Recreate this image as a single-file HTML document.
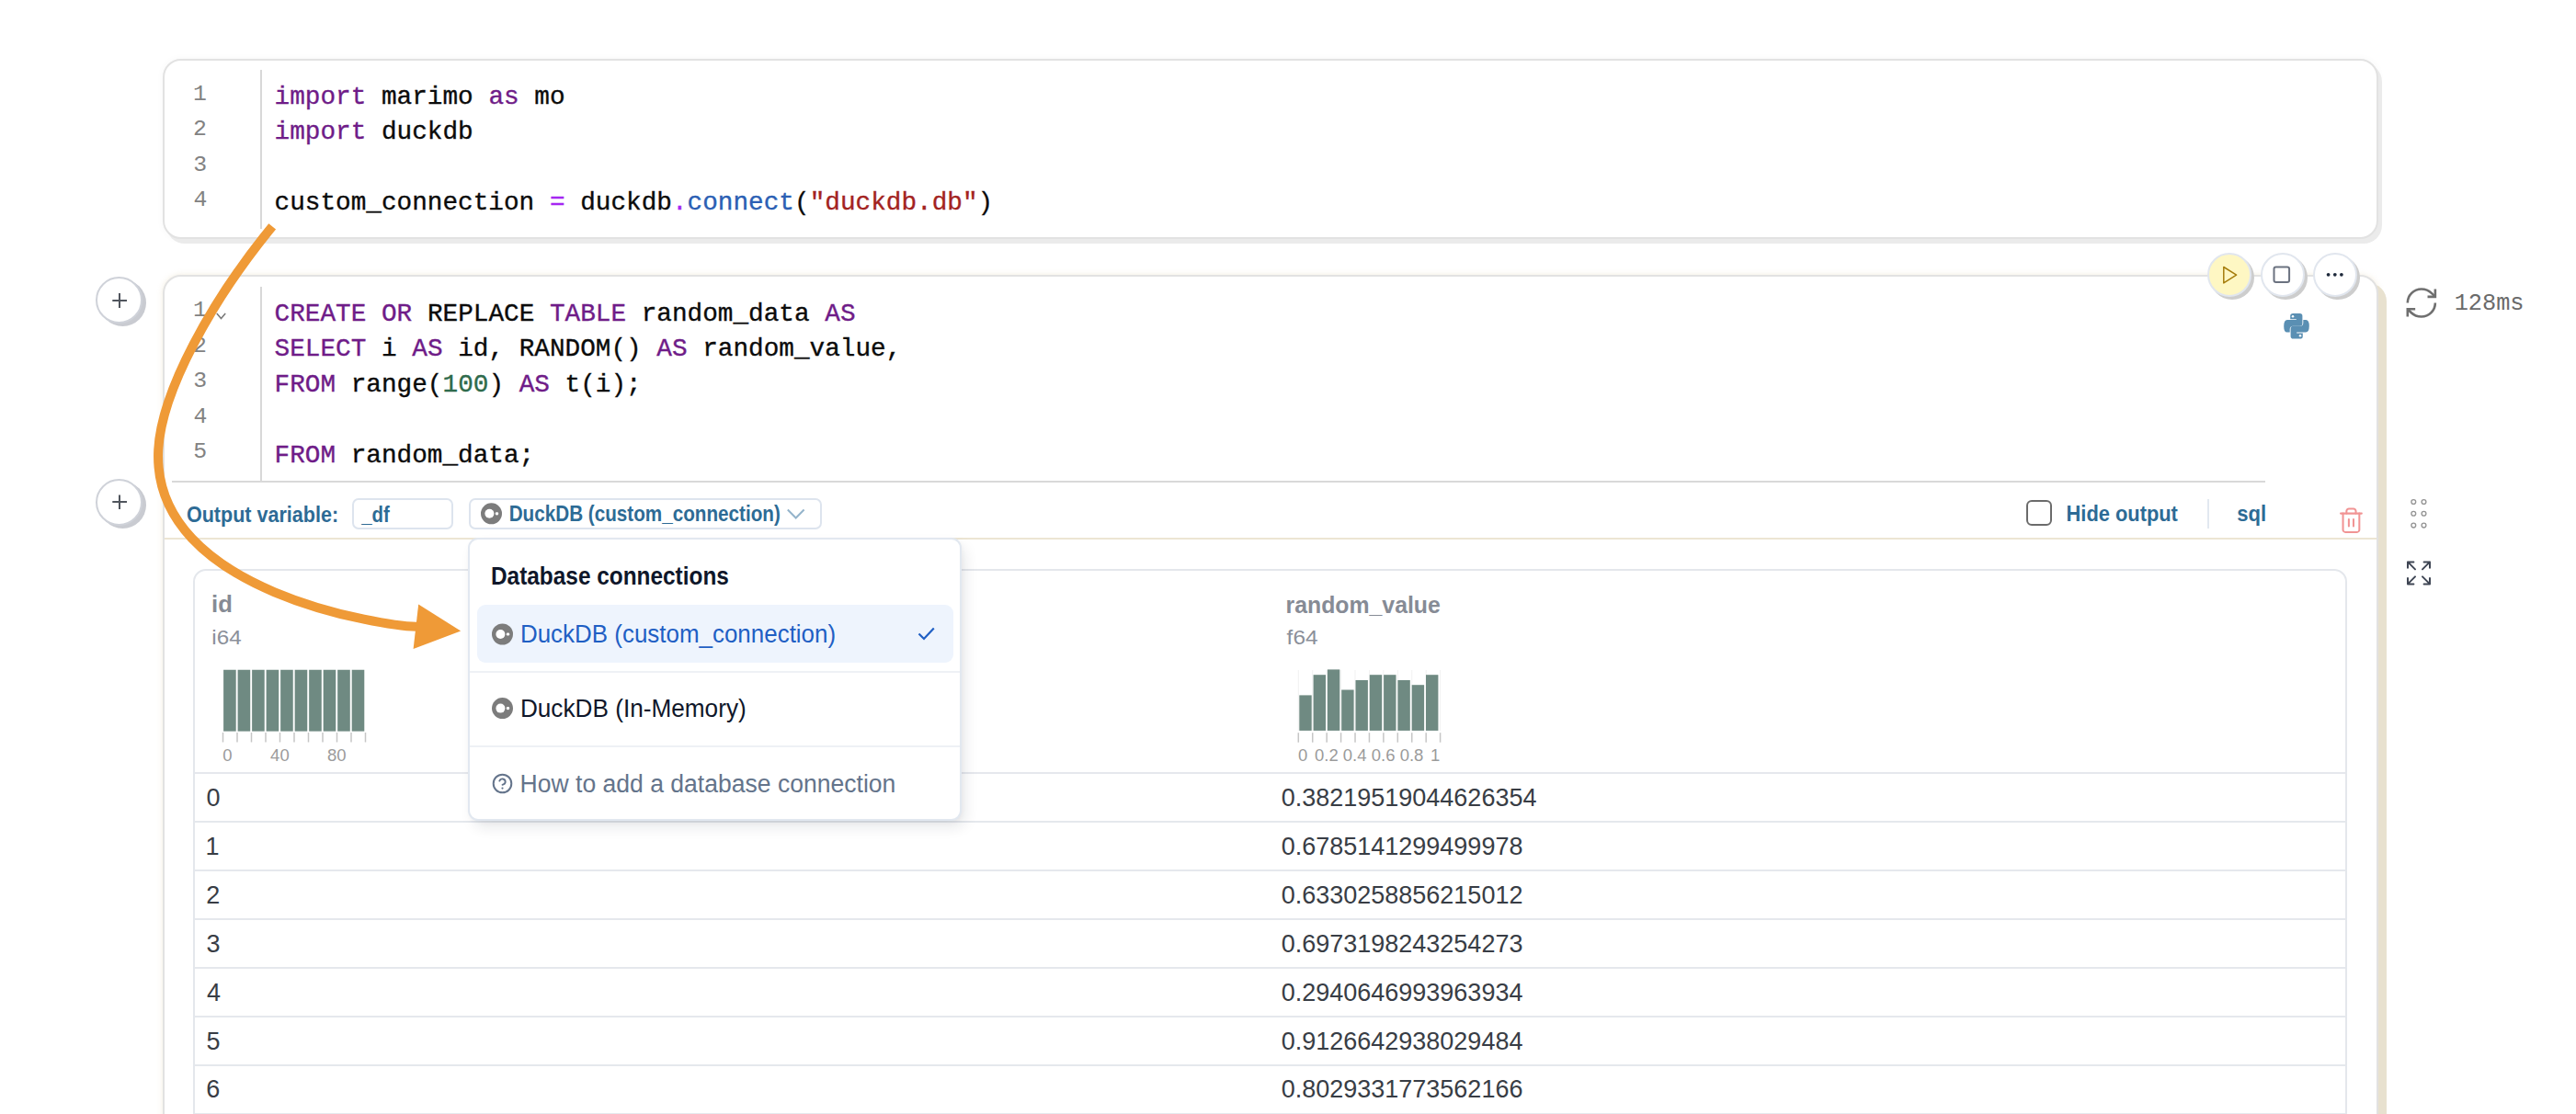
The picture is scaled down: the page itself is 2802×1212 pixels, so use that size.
<!DOCTYPE html>
<html><head><meta charset="utf-8"><title>marimo</title>
<style>
html,body{margin:0;padding:0;background:#fff;}
body{width:2802px;height:1212px;position:relative;overflow:hidden;font-family:"Liberation Sans",sans-serif;}
.abs{position:absolute;box-sizing:border-box;}
.cell1{left:177px;top:64px;width:2410px;height:196px;border:2px solid #e2e2e2;border-radius:20px;background:#fff;box-shadow:4px 5px 0 0 #ebebeb,0 0 8px rgba(0,0,0,0.035);}
.cell2{left:177px;top:299px;width:2410px;height:1000px;border:2px solid #e2e2e2;border-radius:20px;background:#fff;box-shadow:9px 9px 0 0 #e8e1cf,0 0 6px rgba(215,195,150,0.30);}
.gut{width:2px;background:#d8d8d8;}
.plus{width:51px;height:51px;border:2px solid #cfd2d9;border-radius:50%;background:#fff;box-shadow:4px 3px 0 0 #c9cbd1;}
.cbtn{width:48px;height:48px;border:2px solid #e1e6ee;border-radius:50%;background:#fff;box-shadow:3px 3px 0 0 #cdcdcd;}
.inp{border:2px solid #dde4ee;border-radius:7px;background:#fff;}
.tbl{left:210px;top:619px;width:2343px;height:700px;border:2px solid #e4e7ec;border-radius:14px;background:#fff;}
.hl{position:absolute;left:212px;width:2339px;height:2px;background:#e5e8ed;}
.pop{left:509px;top:585px;width:537px;height:308px;border:2px solid #e2e8f0;border-radius:11px;background:#fff;box-shadow:5px 8px 16px -2px rgba(15,23,42,0.11),1px 2px 4px rgba(15,23,42,0.03);}
svg.ov{position:absolute;left:0;top:0;}
</style></head>
<body>
<div class="abs cell1"></div>
<div class="abs gut" style="left:283px;top:76px;height:173px;"></div>
<div class="abs cell2"></div>
<div class="abs gut" style="left:283px;top:312px;height:211px;"></div>
<div class="abs" style="left:187px;top:523px;width:2277px;height:2px;background:#d9d9d9;"></div>
<div class="abs" style="left:179px;top:585px;width:2406px;height:2px;background:#ece5d3;"></div>
<div class="abs plus" style="left:104px;top:301px;"></div>
<div class="abs plus" style="left:104px;top:520.5px;"></div>
<div class="abs cbtn" style="left:2401px;top:275px;background:#fef7c3;"></div>
<div class="abs cbtn" style="left:2459px;top:275px;"></div>
<div class="abs cbtn" style="left:2516px;top:275px;"></div>
<div class="abs inp" style="left:383px;top:542px;width:110px;height:34px;"></div>
<div class="abs inp" style="left:510px;top:542px;width:384px;height:34px;"></div>
<div class="abs" style="left:2204px;top:544px;width:28px;height:28px;border:2.5px solid #6b6b6b;border-radius:6px;box-sizing:border-box;"></div>
<div class="abs" style="left:2401px;top:543px;width:2px;height:32px;background:#e2e8f0;"></div>
<div class="abs tbl"></div>
<div class="hl" style="top:840.2px"></div><div class="hl" style="top:893.1px"></div><div class="hl" style="top:946.1px"></div><div class="hl" style="top:999.0px"></div><div class="hl" style="top:1051.9px"></div><div class="hl" style="top:1104.8px"></div><div class="hl" style="top:1157.8px"></div><div class="hl" style="top:1210.7px"></div>
<div class="abs pop"></div>
<div class="abs" style="left:519px;top:658px;width:518px;height:63px;border-radius:9px;background:#eef4fd;"></div>
<div class="abs" style="left:511px;top:730px;width:533px;height:2px;background:#eef1f5;"></div>
<div class="abs" style="left:511px;top:811px;width:533px;height:2px;background:#eef1f5;"></div>
<svg class="ov" width="2802" height="1212" viewBox="0 0 2802 1212">
<!-- plus icons -->
<g stroke="#50555d" stroke-width="2" stroke-linecap="butt" fill="none">
<path d="M122.3 327H138M130 319V335"/>
<path d="M122.3 546H138M130 538.6V553.9"/>
</g>
<!-- fold chevron -->
<path d="M235.8 341L240.5 346.5L245.2 341" stroke="#7a7a7a" stroke-width="1.6" fill="none"/>
<!-- run / stop / more -->
<path d="M2418.8 290.5L2432.6 299.2L2418.8 307.9Z" stroke="#a57c0b" stroke-width="1.5" fill="none" stroke-linejoin="round"/>
<rect x="2473.5" y="290.4" width="16.6" height="16.6" rx="2.2" stroke="#6b7280" stroke-width="2" fill="none"/>
<g fill="#1e293b"><circle cx="2532.6" cy="298.8" r="1.9"/><circle cx="2539.8" cy="298.8" r="1.9"/><circle cx="2546.9" cy="298.8" r="1.9"/></g>
<!-- python -->
<g transform="translate(2484.2,341)" fill="#5a8fb3">
<path d="M7 2.6 Q7 0 10.2 0 L17.4 0 Q20.2 0 20.2 2.8 L20.2 11 Q20.2 13.8 17.4 13.8 L10 13.8 Q6.5 13.8 6.5 17.3 L6.5 20.6 L3.6 20.6 Q0 20.6 0 14 Q0 7 3.8 7 L13.6 7 L13.6 6.2 L7 6.2 Z"/>
<path d="M7 2.6 Q7 0 10.2 0 L17.4 0 Q20.2 0 20.2 2.8 L20.2 11 Q20.2 13.8 17.4 13.8 L10 13.8 Q6.5 13.8 6.5 17.3 L6.5 20.6 L3.6 20.6 Q0 20.6 0 14 Q0 7 3.8 7 L13.6 7 L13.6 6.2 L7 6.2 Z" transform="rotate(180 13.8 13.8)"/>
<circle cx="9.8" cy="3.3" r="1.25" fill="#fff"/>
<circle cx="17.8" cy="24.3" r="1.25" fill="#fff"/>
</g>
<!-- refresh -->
<g transform="translate(2613.8,309.5) scale(1.67)" stroke="#6f6f6f" stroke-width="1.55" fill="none" stroke-linecap="butt">
<path d="M3 12a9 9 0 0 1 9-9 9.75 9.75 0 0 1 6.74 2.74L21 8"/><path d="M21 3v5h-5"/>
<path d="M21 12a9 9 0 0 1-9 9 9.75 9.75 0 0 1-6.74-2.74L3 16"/><path d="M8 16H3v5"/>
</g>
<!-- trash -->
<g transform="translate(2542.2,551) scale(1.27)" stroke="#f19494" stroke-width="1.6" fill="none" stroke-linecap="round" stroke-linejoin="round">
<path d="M3 6h18"/><path d="M19 6v14c0 1-1 2-2 2H7c-1 0-2-1-2-2V6"/><path d="M8 6V4c0-1 1-2 2-2h4c1 0 2 1 2 2v2"/>
<line x1="10" y1="11" x2="10" y2="17"/><line x1="14" y1="11" x2="14" y2="17"/>
</g>
<!-- drag dots -->
<g stroke="#959595" stroke-width="1.35" fill="none">
<circle cx="2625.3" cy="546" r="2.4"/><circle cx="2636.5" cy="546" r="2.4"/>
<circle cx="2625.3" cy="558.8" r="2.4"/><circle cx="2636.5" cy="558.8" r="2.4"/>
<circle cx="2625.3" cy="571.6" r="2.4"/><circle cx="2636.5" cy="571.6" r="2.4"/>
</g>
<!-- expand -->
<g transform="translate(2615,607.4) scale(1.333)" stroke="#3f4654" stroke-width="1.5" fill="none" stroke-linecap="round" stroke-linejoin="round">
<path d="m21 21-6-6m6 6v-4.8m0 4.8h-4.8"/><path d="M3 16.2V21m0 0h4.8M3 21l6-6"/><path d="M21 7.8V3m0 0h-4.8M21 3l-6 6"/><path d="M3 7.8V3m0 0h4.8M3 3l6 6"/>
</g>
<!-- dropdown chevron -->
<path d="M856.8 554.5L865.7 563.5L874.6 554.5" stroke="#94b4cb" stroke-width="2" fill="none"/>
<!-- duck icons -->
<circle cx="534.5" cy="558.8" r="11.5" fill="#7c7c7c"/><circle cx="532.4" cy="558.8" r="5.00" fill="#fff"/><rect x="538.8" y="557.1999999999999" width="3.4" height="3.2" rx="1.4" fill="#fff"/>
<circle cx="546.5" cy="690" r="11.5" fill="#7c7c7c"/><circle cx="544.4" cy="690" r="5.00" fill="#fff"/><rect x="550.8" y="688.4" width="3.4" height="3.2" rx="1.4" fill="#fff"/>
<circle cx="546.5" cy="770.6" r="11.5" fill="#7c7c7c"/><circle cx="544.4" cy="770.6" r="5.00" fill="#fff"/><rect x="550.8" y="769.0" width="3.4" height="3.2" rx="1.4" fill="#fff"/>
<!-- check -->
<path d="M999.5 689.5L1005 695L1015.8 683.5" stroke="#1f5fc4" stroke-width="2.2" fill="none"/>
<!-- help -->
<circle cx="546.5" cy="852.5" r="9.8" stroke="#64748b" stroke-width="2" fill="none"/>
<path d="M543.3 849.6a3.3 3.3 0 0 1 6.4 1.1c0 2.2-3.2 3.1-3.2 3.1" stroke="#64748b" stroke-width="1.9" fill="none" stroke-linecap="round"/>
<circle cx="546.5" cy="857.6" r="1.1" fill="#64748b"/>
<!-- histograms -->
<rect x="1411.80" y="729" width="1" height="66" fill="#f1f1f1"/><rect x="1427.23" y="729" width="1" height="66" fill="#f1f1f1"/><rect x="1442.66" y="729" width="1" height="66" fill="#f1f1f1"/><rect x="1458.09" y="729" width="1" height="66" fill="#f1f1f1"/><rect x="1473.52" y="729" width="1" height="66" fill="#f1f1f1"/><rect x="1488.95" y="729" width="1" height="66" fill="#f1f1f1"/><rect x="1504.38" y="729" width="1" height="66" fill="#f1f1f1"/><rect x="1519.81" y="729" width="1" height="66" fill="#f1f1f1"/><rect x="1535.24" y="729" width="1" height="66" fill="#f1f1f1"/><rect x="1550.67" y="729" width="1" height="66" fill="#f1f1f1"/><rect x="1566.10" y="729" width="1" height="66" fill="#f1f1f1"/>
<rect x="243.10" y="728.75" width="13.60" height="66.85" fill="#6f8a82"/><rect x="258.61" y="728.75" width="13.60" height="66.85" fill="#6f8a82"/><rect x="274.12" y="728.75" width="13.60" height="66.85" fill="#6f8a82"/><rect x="289.63" y="728.75" width="13.60" height="66.85" fill="#6f8a82"/><rect x="305.14" y="728.75" width="13.60" height="66.85" fill="#6f8a82"/><rect x="320.65" y="728.75" width="13.60" height="66.85" fill="#6f8a82"/><rect x="336.16" y="728.75" width="13.60" height="66.85" fill="#6f8a82"/><rect x="351.67" y="728.75" width="13.60" height="66.85" fill="#6f8a82"/><rect x="367.18" y="728.75" width="13.60" height="66.85" fill="#6f8a82"/><rect x="382.69" y="728.75" width="13.60" height="66.85" fill="#6f8a82"/>
<rect x="241.75" y="797" width="1.5" height="10.5" fill="#c6c6c6"/><rect x="257.25" y="797" width="1.5" height="10.5" fill="#c6c6c6"/><rect x="272.75" y="797" width="1.5" height="10.5" fill="#c6c6c6"/><rect x="288.25" y="797" width="1.5" height="10.5" fill="#c6c6c6"/><rect x="303.75" y="797" width="1.5" height="10.5" fill="#c6c6c6"/><rect x="319.25" y="797" width="1.5" height="10.5" fill="#c6c6c6"/><rect x="334.75" y="797" width="1.5" height="10.5" fill="#c6c6c6"/><rect x="350.25" y="797" width="1.5" height="10.5" fill="#c6c6c6"/><rect x="365.75" y="797" width="1.5" height="10.5" fill="#c6c6c6"/><rect x="381.25" y="797" width="1.5" height="10.5" fill="#c6c6c6"/><rect x="396.75" y="797" width="1.5" height="10.5" fill="#c6c6c6"/>
<rect x="1413.30" y="756.40" width="13.40" height="38.50" fill="#6f8a82"/><rect x="1428.60" y="734.20" width="13.40" height="60.70" fill="#6f8a82"/><rect x="1443.90" y="728.40" width="13.40" height="66.50" fill="#6f8a82"/><rect x="1459.20" y="750.50" width="13.40" height="44.40" fill="#6f8a82"/><rect x="1474.50" y="740.00" width="13.40" height="54.90" fill="#6f8a82"/><rect x="1489.80" y="734.20" width="13.40" height="60.70" fill="#6f8a82"/><rect x="1505.10" y="734.20" width="13.40" height="60.70" fill="#6f8a82"/><rect x="1520.40" y="740.00" width="13.40" height="54.90" fill="#6f8a82"/><rect x="1535.70" y="745.20" width="13.40" height="49.70" fill="#6f8a82"/><rect x="1551.00" y="734.20" width="13.40" height="60.70" fill="#6f8a82"/>
<rect x="1411.55" y="797.2" width="1.5" height="10.5" fill="#c6c6c6"/><rect x="1426.98" y="797.2" width="1.5" height="10.5" fill="#c6c6c6"/><rect x="1442.41" y="797.2" width="1.5" height="10.5" fill="#c6c6c6"/><rect x="1457.84" y="797.2" width="1.5" height="10.5" fill="#c6c6c6"/><rect x="1473.27" y="797.2" width="1.5" height="10.5" fill="#c6c6c6"/><rect x="1488.70" y="797.2" width="1.5" height="10.5" fill="#c6c6c6"/><rect x="1504.13" y="797.2" width="1.5" height="10.5" fill="#c6c6c6"/><rect x="1519.56" y="797.2" width="1.5" height="10.5" fill="#c6c6c6"/><rect x="1534.99" y="797.2" width="1.5" height="10.5" fill="#c6c6c6"/><rect x="1550.42" y="797.2" width="1.5" height="10.5" fill="#c6c6c6"/><rect x="1565.85" y="797.2" width="1.5" height="10.5" fill="#c6c6c6"/>
<!-- text -->
<text x="298.60" y="112.90" font-family="Liberation Mono" font-size="27.713" fill="#6f1c88" stroke="#6f1c88" stroke-width="0.35" xml:space="preserve">import</text>
<text x="398.38" y="112.90" font-family="Liberation Mono" font-size="27.713" fill="#0b0b0b" stroke="#0b0b0b" stroke-width="0.35" xml:space="preserve"> marimo </text>
<text x="531.42" y="112.90" font-family="Liberation Mono" font-size="27.713" fill="#6f1c88" stroke="#6f1c88" stroke-width="0.35" xml:space="preserve">as</text>
<text x="564.68" y="112.90" font-family="Liberation Mono" font-size="27.713" fill="#0b0b0b" stroke="#0b0b0b" stroke-width="0.35" xml:space="preserve"> mo</text>
<text x="210.06" y="109.00" font-family="Liberation Mono" font-weight="normal" font-size="24.80" fill="#828282">1</text>
<text x="298.60" y="151.35" font-family="Liberation Mono" font-size="27.713" fill="#6f1c88" stroke="#6f1c88" stroke-width="0.35" xml:space="preserve">import</text>
<text x="398.38" y="151.35" font-family="Liberation Mono" font-size="27.713" fill="#0b0b0b" stroke="#0b0b0b" stroke-width="0.35" xml:space="preserve"> duckdb</text>
<text x="210.06" y="147.45" font-family="Liberation Mono" font-weight="normal" font-size="24.80" fill="#828282">2</text>
<text x="210.19" y="185.90" font-family="Liberation Mono" font-weight="normal" font-size="24.80" fill="#828282">3</text>
<text x="298.60" y="228.25" font-family="Liberation Mono" font-size="27.713" fill="#0b0b0b" stroke="#0b0b0b" stroke-width="0.35" xml:space="preserve">custom_connection </text>
<text x="597.94" y="228.25" font-family="Liberation Mono" font-size="27.713" fill="#a626f2" stroke="#a626f2" stroke-width="0.35" xml:space="preserve">=</text>
<text x="614.57" y="228.25" font-family="Liberation Mono" font-size="27.713" fill="#0b0b0b" stroke="#0b0b0b" stroke-width="0.35" xml:space="preserve"> duckdb</text>
<text x="730.98" y="228.25" font-family="Liberation Mono" font-size="27.713" fill="#a626f2" stroke="#a626f2" stroke-width="0.35" xml:space="preserve">.</text>
<text x="747.61" y="228.25" font-family="Liberation Mono" font-size="27.713" fill="#2b5fb4" stroke="#2b5fb4" stroke-width="0.35" xml:space="preserve">connect</text>
<text x="864.02" y="228.25" font-family="Liberation Mono" font-size="27.713" fill="#0b0b0b" stroke="#0b0b0b" stroke-width="0.35" xml:space="preserve">(</text>
<text x="880.65" y="228.25" font-family="Liberation Mono" font-size="27.713" fill="#a3231f" stroke="#a3231f" stroke-width="0.35" xml:space="preserve">&quot;duckdb.db&quot;</text>
<text x="1063.58" y="228.25" font-family="Liberation Mono" font-size="27.713" fill="#0b0b0b" stroke="#0b0b0b" stroke-width="0.35" xml:space="preserve">)</text>
<text x="210.56" y="224.35" font-family="Liberation Mono" font-weight="normal" font-size="24.80" fill="#828282">4</text>
<text x="298.60" y="348.90" font-family="Liberation Mono" font-size="27.713" fill="#6f1c88" stroke="#6f1c88" stroke-width="0.35" xml:space="preserve">CREATE</text>
<text x="415.01" y="348.90" font-family="Liberation Mono" font-size="27.713" fill="#6f1c88" stroke="#6f1c88" stroke-width="0.35" xml:space="preserve">OR</text>
<text x="448.27" y="348.90" font-family="Liberation Mono" font-size="27.713" fill="#0b0b0b" stroke="#0b0b0b" stroke-width="0.35" xml:space="preserve"> REPLACE </text>
<text x="597.94" y="348.90" font-family="Liberation Mono" font-size="27.713" fill="#6f1c88" stroke="#6f1c88" stroke-width="0.35" xml:space="preserve">TABLE</text>
<text x="681.09" y="348.90" font-family="Liberation Mono" font-size="27.713" fill="#0b0b0b" stroke="#0b0b0b" stroke-width="0.35" xml:space="preserve"> random_data </text>
<text x="897.28" y="348.90" font-family="Liberation Mono" font-size="27.713" fill="#6f1c88" stroke="#6f1c88" stroke-width="0.35" xml:space="preserve">AS</text>
<text x="210.06" y="344.40" font-family="Liberation Mono" font-weight="normal" font-size="24.80" fill="#828282">1</text>
<text x="298.60" y="387.40" font-family="Liberation Mono" font-size="27.713" fill="#6f1c88" stroke="#6f1c88" stroke-width="0.35" xml:space="preserve">SELECT</text>
<text x="398.38" y="387.40" font-family="Liberation Mono" font-size="27.713" fill="#0b0b0b" stroke="#0b0b0b" stroke-width="0.35" xml:space="preserve"> i </text>
<text x="448.27" y="387.40" font-family="Liberation Mono" font-size="27.713" fill="#6f1c88" stroke="#6f1c88" stroke-width="0.35" xml:space="preserve">AS</text>
<text x="481.53" y="387.40" font-family="Liberation Mono" font-size="27.713" fill="#0b0b0b" stroke="#0b0b0b" stroke-width="0.35" xml:space="preserve"> id, RANDOM() </text>
<text x="714.35" y="387.40" font-family="Liberation Mono" font-size="27.713" fill="#6f1c88" stroke="#6f1c88" stroke-width="0.35" xml:space="preserve">AS</text>
<text x="747.61" y="387.40" font-family="Liberation Mono" font-size="27.713" fill="#0b0b0b" stroke="#0b0b0b" stroke-width="0.35" xml:space="preserve"> random_value,</text>
<text x="210.06" y="382.90" font-family="Liberation Mono" font-weight="normal" font-size="24.80" fill="#828282">2</text>
<text x="298.60" y="425.90" font-family="Liberation Mono" font-size="27.713" fill="#6f1c88" stroke="#6f1c88" stroke-width="0.35" xml:space="preserve">FROM</text>
<text x="365.12" y="425.90" font-family="Liberation Mono" font-size="27.713" fill="#0b0b0b" stroke="#0b0b0b" stroke-width="0.35" xml:space="preserve"> range(</text>
<text x="481.53" y="425.90" font-family="Liberation Mono" font-size="27.713" fill="#2f6b4c" stroke="#2f6b4c" stroke-width="0.35" xml:space="preserve">100</text>
<text x="531.42" y="425.90" font-family="Liberation Mono" font-size="27.713" fill="#0b0b0b" stroke="#0b0b0b" stroke-width="0.35" xml:space="preserve">) </text>
<text x="564.68" y="425.90" font-family="Liberation Mono" font-size="27.713" fill="#6f1c88" stroke="#6f1c88" stroke-width="0.35" xml:space="preserve">AS</text>
<text x="597.94" y="425.90" font-family="Liberation Mono" font-size="27.713" fill="#0b0b0b" stroke="#0b0b0b" stroke-width="0.35" xml:space="preserve"> t(i);</text>
<text x="210.19" y="421.40" font-family="Liberation Mono" font-weight="normal" font-size="24.80" fill="#828282">3</text>
<text x="210.56" y="459.90" font-family="Liberation Mono" font-weight="normal" font-size="24.80" fill="#828282">4</text>
<text x="298.60" y="502.90" font-family="Liberation Mono" font-size="27.713" fill="#6f1c88" stroke="#6f1c88" stroke-width="0.35" xml:space="preserve">FROM</text>
<text x="365.12" y="502.90" font-family="Liberation Mono" font-size="27.713" fill="#0b0b0b" stroke="#0b0b0b" stroke-width="0.35" xml:space="preserve"> random_data;</text>
<text x="210.19" y="498.40" font-family="Liberation Mono" font-weight="normal" font-size="24.80" fill="#828282">5</text>
<text x="202.89" y="567.50" font-family="Liberation Sans" font-weight="bold" font-size="24.50" fill="#2d6b95" textLength="165.22" lengthAdjust="spacingAndGlyphs">Output variable:</text>
<text x="393.20" y="567.50" font-family="Liberation Sans" font-weight="bold" font-size="24.50" fill="#2d6b95" textLength="30.55" lengthAdjust="spacingAndGlyphs">_df</text>
<text x="553.66" y="566.80" font-family="Liberation Sans" font-weight="bold" font-size="24.00" fill="#2d6b95" textLength="295.17" lengthAdjust="spacingAndGlyphs">DuckDB (custom_connection)</text>
<text x="2247.58" y="566.80" font-family="Liberation Sans" font-weight="bold" font-size="24.00" fill="#2d6b95" textLength="121.33" lengthAdjust="spacingAndGlyphs">Hide output</text>
<text x="2433.23" y="566.80" font-family="Liberation Sans" font-weight="bold" font-size="24.00" fill="#2d6b95" textLength="31.92" lengthAdjust="spacingAndGlyphs">sql</text>
<text x="534.01" y="636.25" font-family="Liberation Sans" font-weight="bold" font-size="27.50" fill="#0f172a" textLength="258.85" lengthAdjust="spacingAndGlyphs">Database connections</text>
<text x="565.92" y="698.75" font-family="Liberation Sans" font-weight="normal" font-size="27.00" fill="#1f5fc4" textLength="343.21" lengthAdjust="spacingAndGlyphs">DuckDB (custom_connection)</text>
<text x="565.91" y="780.00" font-family="Liberation Sans" font-weight="normal" font-size="27.00" fill="#0f172a" textLength="245.80" lengthAdjust="spacingAndGlyphs">DuckDB (In-Memory)</text>
<text x="565.58" y="861.80" font-family="Liberation Sans" font-weight="normal" font-size="27.00" fill="#64748b" textLength="408.75" lengthAdjust="spacingAndGlyphs">How to add a database connection</text>
<text x="230.11" y="666.25" font-family="Liberation Sans" font-weight="bold" font-size="26.00" fill="#868b95" textLength="22.78" lengthAdjust="spacingAndGlyphs">id</text>
<text x="230.33" y="700.60" font-family="Liberation Sans" font-weight="normal" font-size="22.30" fill="#8b909a" textLength="32.29" lengthAdjust="spacingAndGlyphs">i64</text>
<text x="1398.59" y="666.50" font-family="Liberation Sans" font-weight="bold" font-size="26.00" fill="#868b95" textLength="168.19" lengthAdjust="spacingAndGlyphs">random_value</text>
<text x="1399.63" y="700.80" font-family="Liberation Sans" font-weight="normal" font-size="22.30" fill="#8b909a" textLength="33.90" lengthAdjust="spacingAndGlyphs">f64</text>
<text x="2669.63" y="337.00" font-family="Liberation Mono" font-weight="normal" font-size="26.00" fill="#6a6a6a" textLength="75.90" lengthAdjust="spacingAndGlyphs">128ms</text>
<text x="247.50" y="827.50" text-anchor="middle" font-family="Liberation Sans" font-size="18.50" fill="#9b9b9b">0</text>
<text x="304.40" y="827.50" text-anchor="middle" font-family="Liberation Sans" font-size="18.50" fill="#9b9b9b">40</text>
<text x="366.25" y="827.50" text-anchor="middle" font-family="Liberation Sans" font-size="18.50" fill="#9b9b9b">80</text>
<text x="1417.20" y="827.50" text-anchor="middle" font-family="Liberation Sans" font-size="18.50" fill="#9b9b9b">0</text>
<text x="1442.90" y="827.50" text-anchor="middle" font-family="Liberation Sans" font-size="18.50" fill="#9b9b9b">0.2</text>
<text x="1473.70" y="827.50" text-anchor="middle" font-family="Liberation Sans" font-size="18.50" fill="#9b9b9b">0.4</text>
<text x="1504.70" y="827.50" text-anchor="middle" font-family="Liberation Sans" font-size="18.50" fill="#9b9b9b">0.6</text>
<text x="1535.50" y="827.50" text-anchor="middle" font-family="Liberation Sans" font-size="18.50" fill="#9b9b9b">0.8</text>
<text x="1561.20" y="827.50" text-anchor="middle" font-family="Liberation Sans" font-size="18.50" fill="#9b9b9b">1</text>
<text x="224.42" y="876.90" font-family="Liberation Sans" font-weight="normal" font-size="27.00" fill="#383d45">0</text>
<text x="1393.67" y="876.90" font-family="Liberation Sans" font-weight="normal" font-size="27.00" fill="#383d45">0.38219519044626354</text>
<text x="223.48" y="929.83" font-family="Liberation Sans" font-weight="normal" font-size="27.00" fill="#383d45">1</text>
<text x="1393.67" y="929.83" font-family="Liberation Sans" font-weight="normal" font-size="27.00" fill="#383d45">0.6785141299499978</text>
<text x="224.15" y="982.76" font-family="Liberation Sans" font-weight="normal" font-size="27.00" fill="#383d45">2</text>
<text x="1393.67" y="982.76" font-family="Liberation Sans" font-weight="normal" font-size="27.00" fill="#383d45">0.6330258856215012</text>
<text x="224.42" y="1035.69" font-family="Liberation Sans" font-weight="normal" font-size="27.00" fill="#383d45">3</text>
<text x="1393.67" y="1035.69" font-family="Liberation Sans" font-weight="normal" font-size="27.00" fill="#383d45">0.6973198243254273</text>
<text x="224.96" y="1088.62" font-family="Liberation Sans" font-weight="normal" font-size="27.00" fill="#383d45">4</text>
<text x="1393.67" y="1088.62" font-family="Liberation Sans" font-weight="normal" font-size="27.00" fill="#383d45">0.2940646993963934</text>
<text x="224.42" y="1141.55" font-family="Liberation Sans" font-weight="normal" font-size="27.00" fill="#383d45">5</text>
<text x="1393.67" y="1141.55" font-family="Liberation Sans" font-weight="normal" font-size="27.00" fill="#383d45">0.9126642938029484</text>
<text x="224.15" y="1194.48" font-family="Liberation Sans" font-weight="normal" font-size="27.00" fill="#383d45">6</text>
<text x="1393.67" y="1194.48" font-family="Liberation Sans" font-weight="normal" font-size="27.00" fill="#383d45">0.8029331773562166</text>
<!-- arrow -->
<path d="M296.2,246.3 C229.94,327.22 175.62,425.71 172.24,489.18 C163.88,646.15 424.33,681.59 452.8,681.8 L456,682" stroke="#ef9a37" stroke-width="10" fill="none" stroke-linecap="butt"/>
<path d="M455.2,657.4 L501.2,686.6 L449.6,706.1 Z" fill="#ef9a37"/>
</svg>
</body></html>
